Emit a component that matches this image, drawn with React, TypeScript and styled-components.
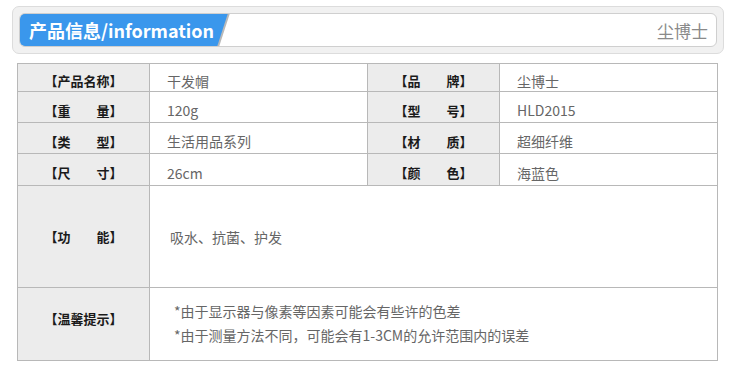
import React from "react";
import styled, { createGlobalStyle } from "styled-components";

const Global = createGlobalStyle`
  html, body { margin: 0; padding: 0; background: #fff; }
  body { font-family: "Noto Sans CJK SC", "Noto Sans", sans-serif; }
`;

const Page = styled.div`
  width: 740px;
  padding: 6px 0 0 12px;
  box-sizing: border-box;
`;

const HeaderOuter = styled.div`
  width: 712px;
  height: 48px;
  box-sizing: border-box;
  border: 1px solid #dcdcdc;
  border-radius: 7px;
  background: #f1f1f1;
  padding: 6px;
`;

const HeaderInner = styled.div`
  position: relative;
  height: 34px;
  box-sizing: border-box;
  border: 1px solid #cfcfcf;
  border-radius: 6px;
  background: #fff;
  display: flex;
  align-items: center;
  justify-content: space-between;
  overflow: hidden;
`;

const TabWrap = styled.div`
  position: relative;
  align-self: stretch;
  margin: -1px 0 -1px -1px;
  width: 211px;
`;

const TabShadow = styled.div`
  position: absolute;
  inset: 0;
  left: 2px;
  background: #b9b9b9;
  clip-path: polygon(0 0, 100% 0, calc(100% - 11px) 100%, 0 100%);
`;

const Tab = styled.div`
  position: absolute;
  inset: 0;
  right: 2px;
  background: #3a97ec;
  border-radius: 6px 0 0 6px;
  clip-path: polygon(0 0, 100% 0, calc(100% - 11px) 100%, 0 100%);
  display: flex;
  align-items: center;
  padding-left: 10px;
  color: #fff;
  font-size: 18px;
  font-weight: 700;
  white-space: nowrap;
`;

const Brand = styled.div`
  color: #8a8a8a;
  font-size: 17px;
  padding-right: 8px;
  padding-top: 1px;
`;

const Table = styled.div`
  margin: 9px 0 0 5px;
  width: 701px;
  box-sizing: border-box;
  border-top: 1px solid #b8b8b8;
  border-left: 1px solid #b8b8b8;
  display: grid;
  grid-template-columns: 132px 218px 132px 218px;
  grid-template-rows: 28px 31px 31px 32px 102px 73px;
`;

const Cell = styled.div<{ $label?: boolean; $span?: number }>`
  box-sizing: border-box;
  border-right: 1px solid #b8b8b8;
  border-bottom: 1px solid #b8b8b8;
  background: ${(p) => (p.$label ? "#ececec" : "#fff")};
  grid-column: ${(p) => (p.$span ? `span ${p.$span}` : "auto")};
  display: flex;
  align-items: center;
  justify-content: ${(p) => (p.$label ? "center" : "flex-start")};
  padding-top: 6px;
  padding-left: ${(p) => (p.$label ? "0" : "17px")};
  color: ${(p) => (p.$label ? "#1a1a1a" : "#666")};
  font-size: ${(p) => (p.$label ? "13px" : "14px")};
  font-weight: ${(p) => (p.$label ? 700 : 400)};
  white-space: pre;
`;

const WideCell = styled(Cell)<{ $pad: number }>`
  padding-top: 0;
  padding-left: ${(p) => p.$pad}px;
`;

const LabelTall = styled(Cell)<{ $lift: number }>`
  padding-top: 0;
  padding-bottom: ${(p) => p.$lift}px;
`;

const Notes = styled.div`
  display: flex;
  flex-direction: column;
  gap: 4px;
  line-height: 20px;
  padding-bottom: 3px;
`;

const rows: [string, string, string, string][] = [
  ["【产品名称】", "干发帽", "【品　　牌】", "尘博士"],
  ["【重　　量】", "120g", "【型　　号】", "HLD2015"],
  ["【类　　型】", "生活用品系列", "【材　　质】", "超细纤维"],
  ["【尺　　寸】", "26cm", "【颜　　色】", "海蓝色"],
];

export default function App() {
  return (
    <>
      <Global />
      <Page>
        <HeaderOuter>
          <HeaderInner>
            <TabWrap>
              <TabShadow />
              <Tab>产品信息/information</Tab>
            </TabWrap>
            <Brand>尘博士</Brand>
          </HeaderInner>
        </HeaderOuter>
        <Table>
          {rows.map((r) => (
            <React.Fragment key={r[0]}>
              <Cell $label>{r[0]}</Cell>
              <Cell>{r[1]}</Cell>
              <Cell $label>{r[2]}</Cell>
              <Cell>{r[3]}</Cell>
            </React.Fragment>
          ))}
          <LabelTall $label $lift={0}>【功　　能】</LabelTall>
          <WideCell $span={3} $pad={20}>吸水、抗菌、护发</WideCell>
          <LabelTall $label $lift={12}>【温馨提示】</LabelTall>
          <WideCell $span={3} $pad={24}>
            <Notes>
              <span>*由于显示器与像素等因素可能会有些许的色差</span>
              <span>*由于测量方法不同，可能会有1-3CM的允许范围内的误差</span>
            </Notes>
          </WideCell>
        </Table>
      </Page>
    </>
  );
}
